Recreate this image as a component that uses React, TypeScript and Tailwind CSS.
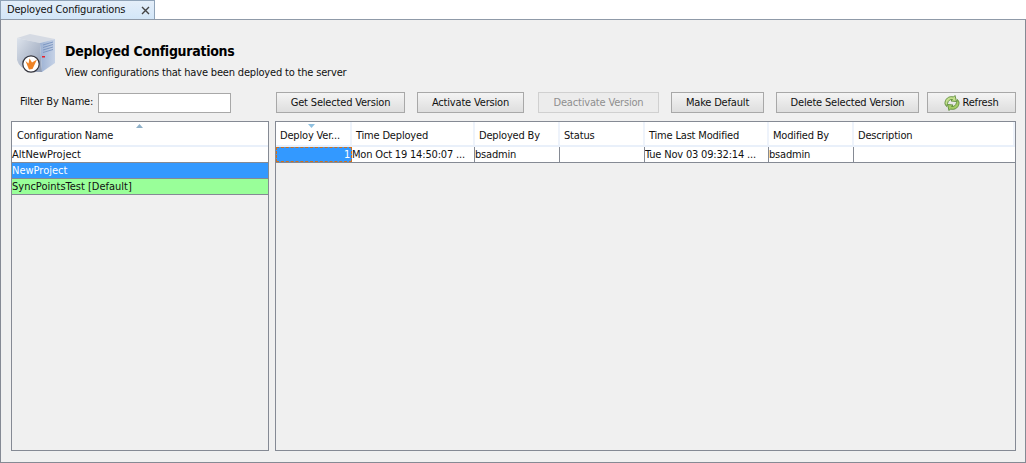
import React from "react";

const cols = [
  { t: "Deploy Ver...", w: "w-[76px]" },
  { t: "Time Deployed", w: "w-[123px]" },
  { t: "Deployed By", w: "w-[85px]" },
  { t: "Status", w: "w-[85px]" },
  { t: "Time Last Modified", w: "w-[124px]" },
  { t: "Modified By", w: "w-[85px]" },
  { t: "Description", w: "flex-1" },
];

function ServerIcon() {
  return (
    <svg width="40" height="44" viewBox="0 0 40 44" className="shrink-0">
      <defs>
        <linearGradient id="f" x1="0" y1="0" x2="1" y2="1">
          <stop offset="0" stopColor="#dde3ec" />
          <stop offset="1" stopColor="#8e9bb3" />
        </linearGradient>
        <linearGradient id="s" x1="0" y1="0" x2="1" y2="0">
          <stop offset="0" stopColor="#9db2d4" />
          <stop offset="1" stopColor="#c6d2e6" />
        </linearGradient>
      </defs>
      <path d="M1 6 L14 2 L39 7 L24 11 Z" fill="#d5dae3" />
      <path d="M1 6 L24 11 L26 40 L15 40 Q3 36 1 28 Z" fill="url(#f)" />
      <path d="M24 11 L39 7 L39 31 L26 40 Z" fill="url(#s)" />
      <path d="M27 13 L37 10 M27 15.5 L37 12.5 M27 18 L37 15 M27 20.5 L37 17.5" stroke="#7d97c2" strokeWidth="1" />
      <rect x="26" y="24" width="3" height="1.5" fill="#e8202a" />
      <circle cx="15" cy="32" r="8.2" fill="#fff" stroke="#34343c" strokeWidth="1.2" />
      <path d="M9.5 29 L12.5 31.5 L13.5 26.5 L16 30.5 L21 27.5 L16.5 37 L13 37.5 Z" fill="#ee8326" />
    </svg>
  );
}

function RefreshIcon() {
  return (
    <svg width="16" height="16" viewBox="0 0 16 16" className="shrink-0">
      <path d="M1 9 C0.5 4 5 0.5 9.5 2 L11 0.5 L12.5 6.5 L7 6 L8.5 4.5 C6.5 4 4 5.5 3.5 8.5 L2.5 11.5 Z" fill="#c4e08e" stroke="#5d8c3a" strokeWidth="0.9" />
      <path d="M15 7 C15.5 12 11 15.5 6.5 14 L5 15.5 L3.5 9.5 L9 10 L7.5 11.5 C9.5 12 12 10.5 12.5 7.5 L13.5 4.5 Z" fill="#a4cc66" stroke="#5d8c3a" strokeWidth="0.9" />
    </svg>
  );
}

function Btn({ children, w, disabled }: { children: React.ReactNode; w: string; disabled?: boolean }) {
  return (
    <button
      className={`${w} h-[21px] flex items-center justify-center gap-[2px] pt-[1px] border whitespace-nowrap text-[11px] ${
        disabled
          ? "text-[#8f8f8f] bg-[#ececec] border-[#d0d0d0]"
          : "text-[#111] border-[#a8a8a8] bg-gradient-to-b from-[#f4f4f4] to-[#dedede]"
      }`}
    >
      {children}
    </button>
  );
}

function Sort({ up }: { up?: boolean }) {
  return (
    <svg width="9" height="4" viewBox="0 0 9 4" className="absolute top-[2px]">
      <path d={up ? "M4.5 0 L8 4 L1 4 Z" : "M1 0 L8 0 L4.5 4 Z"} fill={up ? "#8fb0c8" : "#8fc0e0"} />
    </svg>
  );
}

export default function App() {
  return (
    <div className="w-[1026px] h-[463px] bg-white text-[11px] tracking-[-0.18px] text-[#111] font-['DejaVu_Sans',sans-serif] [font-stretch:condensed] flex flex-col overflow-hidden">
      <div className="h-[20px] flex shrink-0">
        <div className="w-[155px] h-[20px] border border-b-0 border-[#8fa3b8] bg-gradient-to-b from-[#e4eef9] to-[#d2e6f8] flex items-center pl-[6px] pr-[4px] justify-between">
          <span className="text-[11px] whitespace-nowrap">Deployed Configurations</span>
          <svg width="9" height="9" viewBox="0 0 9 9">
            <path d="M1 1 L8 8 M8 1 L1 8" stroke="#444" strokeWidth="1.4" />
          </svg>
        </div>
      </div>
      <div className="flex-1 flex flex-col border border-[#858a94] border-t-[#8f9aa8] bg-[#f0f0f0] -mt-px pt-[12px] pl-[10px] pr-[9px] pb-[11px]">
        <div className="flex items-start h-[44px] pl-[5px] gap-[9px]">
          <ServerIcon />
          <div className="flex flex-col pt-[9px]">
            <span className="font-bold text-[14px] tracking-[-0.28px] leading-[20px] text-black whitespace-nowrap">Deployed Configurations</span>
            <span className="text-[11px] leading-[14px] mt-[5px] whitespace-nowrap">View configurations that have been deployed to the server</span>
          </div>
        </div>
        <div className="flex items-center h-[21px] mt-[16px]">
          <span className="w-[87px] pl-[9px] shrink-0 whitespace-nowrap">Filter By Name:</span>
          <input className="w-[133px] h-[20px] border border-[#a8a8a8] bg-white" />
          <div className="flex ml-[45px] gap-[12px]">
            <Btn w="w-[129px]">Get Selected Version</Btn>
            <div className="w-[107px] flex"><Btn w="w-full">Activate Version</Btn></div>
            <div className="ml-[2px]"><Btn w="w-[121px]" disabled>Deactivate Version</Btn></div>
            <Btn w="w-[93px]">Make Default</Btn>
            <Btn w="w-[143px]">Delete Selected Version</Btn>
            <div className="-ml-[4px]"><Btn w="w-[89px]"><RefreshIcon />Refresh</Btn></div>
          </div>
        </div>
        <div className="flex flex-1 gap-[6px] mt-[8px] min-h-0">
          <div className="w-[258px] border border-[#858a94] flex flex-col">
            <div className="relative h-[25px] bg-white border-b-2 border-[#e9f0fa] flex items-center pl-[5px]">
              <div className="absolute left-[123px] top-0"><Sort up /></div>
              <span className="pt-[6px]">Configuration Name</span>
            </div>
            <div className="h-[16px] bg-white border-b border-[#858a94] flex items-center pt-[1px] tracking-normal">AltNewProject</div>
            <div className="h-[16px] bg-[#3399ff] text-white border-b border-[#858a94] flex items-center pt-[1px] tracking-normal">NewProject</div>
            <div className="h-[16px] bg-[#99ff99] border-b border-[#858a94] flex items-center pt-[1px] tracking-normal">SyncPointsTest [Default]</div>
          </div>
          <div className="flex-1 border border-[#858a94] flex flex-col">
            <div className="h-[25px] bg-white border-b-2 border-[#e9f0fa] flex">
              {cols.map((c, i) => (
                <div key={c.t} className={`${c.w} relative flex items-center pt-[6px] pl-[4px] border-r-2 border-[#eef3fb] whitespace-nowrap ${i === 6 ? "border-r-0" : ""}`}>
                  {i === 0 && <div className="absolute left-[31px] top-0"><Sort /></div>}
                  {c.t}
                </div>
              ))}
            </div>
            <div className="h-[16px] flex border-b border-[#858a94] bg-white">
              <div className="w-[76px] bg-[#3399ff] text-white text-right pr-[1px] border border-dashed border-[#d0701c] leading-[14px]">1</div>
              <div className="w-[123px] border-r border-[#858a94] whitespace-nowrap overflow-hidden leading-[15px]">Mon Oct 19 14:50:07 ...</div>
              <div className="w-[85px] border-r border-[#858a94] leading-[15px]">bsadmin</div>
              <div className="w-[85px] border-r border-[#858a94]" />
              <div className="w-[124px] border-r border-[#858a94] whitespace-nowrap overflow-hidden leading-[15px]">Tue Nov 03 09:32:14 ...</div>
              <div className="w-[85px] border-r border-[#858a94] leading-[15px]">bsadmin</div>
              <div className="flex-1" />
            </div>
          </div>
        </div>
      </div>
    </div>
  );
}
